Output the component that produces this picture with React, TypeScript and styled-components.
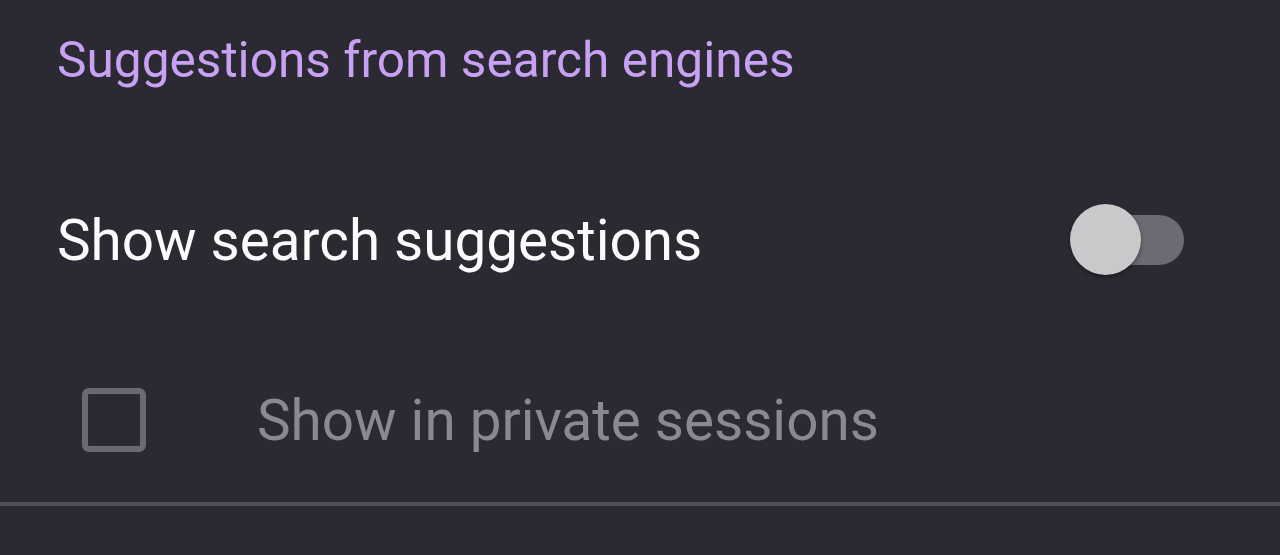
import styled, { createGlobalStyle } from 'styled-components';

const GlobalStyle = createGlobalStyle`
  html, body {
    margin: 0;
    padding: 0;
    background: #2b2a33;
  }
  body {
    font-family: Roboto, 'Noto Sans', sans-serif;
  }
`;

const Page = styled.div`
  width: 1280px;
  height: 555px;
  background: #2b2a33;
  overflow: hidden;
  display: flex;
  flex-direction: column;
`;

const SectionTitle = styled.div`
  height: 120px;
  display: flex;
  align-items: center;
  padding-left: 57px;
  color: #c8a1f4;
  font-size: 49.6px;
  font-weight: 400;
`;

const Row = styled.div<{ $height: number; $disabled?: boolean }>`
  height: ${p => p.$height}px;
  display: flex;
  align-items: center;
  padding-left: 57px;
  padding-right: 96px;
  color: ${p => (p.$disabled ? '#8a8990' : '#fbfbfe')};
`;

const Label = styled.span`
  flex: 1;
  font-size: 56.6px;
  font-weight: 400;
`;

const Switch = styled.div`
  position: relative;
  width: 113px;
  height: 72px;
  display: flex;
  align-items: center;
`;

const Track = styled.div`
  margin-left: 15px;
  width: 98px;
  height: 50px;
  border-radius: 25px;
  background: #6c6b73;
`;

const Thumb = styled.div`
  position: absolute;
  left: -1px;
  top: 0;
  width: 71px;
  height: 71px;
  border-radius: 50%;
  background: #c9c8cb;
  box-shadow: 0 2px 4px rgba(0, 0, 0, 0.4);
`;

const CheckBox = styled.div`
  box-sizing: border-box;
  width: 64px;
  height: 64px;
  margin-left: 25px;
  margin-right: 111px;
  border: 6px solid #6b6a72;
  border-radius: 7px;
`;

const Divider = styled.div`
  margin-top: 22px;
  height: 4px;
  background: #4f4e56;
`;

export default function App() {
  return (
    <Page>
      <GlobalStyle />
      <SectionTitle>Suggestions from search engines</SectionTitle>
      <Row $height={240}>
        <Label>Show search suggestions</Label>
        <Switch>
          <Track />
          <Thumb />
        </Switch>
      </Row>
      <Row $height={120} $disabled>
        <CheckBox />
        <Label>Show in private sessions</Label>
      </Row>
      <Divider />
    </Page>
  );
}
